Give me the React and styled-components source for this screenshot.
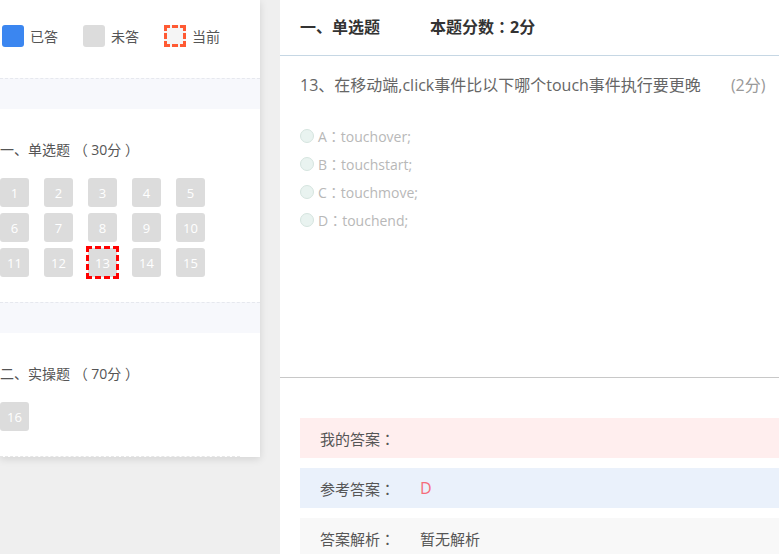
import React from "react";
import styled, { createGlobalStyle, css } from "styled-components";

const GlobalStyle = createGlobalStyle`
  html, body {
    margin: 0;
    padding: 0;
    background: #efefef;
    font-family: "Open Sans", "Noto Sans CJK SC", sans-serif;
    overflow: hidden;
  }
`;

// ─── Layout ──────────────────────────────────────────────────────────────────

const Page = styled.div`
  display: flex;
  gap: 20px;
  height: 554px;
  overflow: hidden;
`;

const Sheet = styled.div`
  width: 260px;
  flex-shrink: 0;
  align-self: flex-start;
  background: #fff;
  box-shadow: 0 2px 8px rgba(0, 0, 0, 0.12);
`;

const Legend = styled.div`
  display: flex;
  align-items: center;
  gap: 25px;
  height: 78px;
  padding: 0 0 6px 2px;
  box-sizing: border-box;
`;

const LegendItem = styled.div`
  display: flex;
  align-items: center;
  gap: 6px;
  font-size: 14px;
  color: #555;
`;

const Swatch = styled.span`
  width: 22px;
  height: 22px;
  border-radius: 3px;
  box-sizing: border-box;
  background: ${({ $kind }) => ($kind === "done" ? "#3b86f0" : $kind === "todo" ? "#dcdcdc" : "#f5f5f5")};
  ${({ $kind }) =>
    $kind === "current" &&
    css`
      border: 3px dashed #ff5a33;
      border-radius: 0;
    `}
`;

const Band = styled.div`
  height: 31px;
  background: #f7f8fc;
  border-top: 1px dashed #e6e8ee;
  box-sizing: border-box;
`;

const Section = styled.div`
  padding: 31px 0 25px;
  ${({ $last }) =>
    $last &&
    css`
      border-bottom: 1px dashed #e6e6e6;
      margin-right: 20px;
    `}
`;

const SectionTitle = styled.div`
  font-size: 14px;
  line-height: 20px;
  color: #555;
  margin-bottom: 18px;
`;

const Grid = styled.div`
  display: grid;
  grid-template-columns: repeat(5, 29px);
  column-gap: 15px;
  row-gap: 6px;
`;

const Cell = styled.div`
  width: 29px;
  height: 29px;
  border-radius: 3px;
  background: #dcdcdc;
  color: #fff;
  font-size: 13px;
  display: flex;
  align-items: center;
  justify-content: center;
  ${({ $current }) =>
    $current &&
    css`
      border-radius: 0;
      outline: 3px dashed #f00;
      outline-offset: -1px;
    `}
`;

// ─── Question ────────────────────────────────────────────────────────────────

const Paper = styled.div`
  flex: 1;
  background: #fff;
  display: flex;
  flex-direction: column;
  min-width: 0;
`;

const Header = styled.div`
  height: 56px;
  flex-shrink: 0;
  display: flex;
  align-items: center;
  gap: 50px;
  padding: 0 0 4px 20px;
  box-sizing: border-box;
  border-bottom: 1px solid #c6d7e4;
  font-size: 16px;
  font-weight: 700;
  color: #333;
`;

const Colon = styled.span`
  font-family: "Noto Sans CJK TC", sans-serif;
`;

const Body = styled.div`
  height: 322px;
  flex-shrink: 0;
  padding: 18px 0 0 20px;
  box-sizing: border-box;
  border-bottom: 1px solid #c8c8c8;
`;

const Stem = styled.div`
  display: flex;
  gap: 30px;
  font-size: 16px;
  line-height: 22px;
  color: #666;
  margin-bottom: 26px;
`;

const Score = styled.span`
  color: #999;
`;

const Options = styled.div`
  display: flex;
  flex-direction: column;
`;

const Option = styled.label`
  display: flex;
  align-items: center;
  gap: 4px;
  height: 28px;
  font-size: 14px;
  color: #b8b8b8;
`;

const Radio = styled.span`
  width: 14px;
  height: 14px;
  border-radius: 50%;
  box-sizing: border-box;
  background: #e9f3f0;
  border: 1px solid #d5e4df;
`;

const Answers = styled.div`
  display: flex;
  flex-direction: column;
  flex-shrink: 0;
  gap: 10px;
  padding: 40px 0 0 20px;
`;

const AnswerRow = styled.div`
  display: flex;
  align-items: center;
  height: 40px;
  padding-left: 20px;
  font-size: 15px;
  color: #555;
  background: ${({ $tone }) => ({ mine: "#ffeeee", ref: "#eaf1fb", note: "#f8f8f8" }[$tone])};
`;

const AnswerLabel = styled.span`
  width: 100px;
  flex-shrink: 0;
`;

const AnswerValue = styled.span`
  color: ${({ $red }) => ($red ? "#f56c7a" : "#555")};
  font-size: ${({ $red }) => ($red ? "16px" : "15px")};
`;

// ─── Data ────────────────────────────────────────────────────────────────────

const sections = [
  { title: "一、单选题 （ 30分 ）", items: Array.from({ length: 15 }, (_, i) => i + 1) },
  { title: "二、实操题 （ 70分 ）", items: [16] },
];

const options = [
  ["A", "touchover;"],
  ["B", "touchstart;"],
  ["C", "touchmove;"],
  ["D", "touchend;"],
];

const CURRENT = 13;

export default function App() {
  return (
    <>
      <GlobalStyle />
      <Page>
        <Sheet>
          <Legend>
            <LegendItem>
              <Swatch $kind="done" />
              已答
            </LegendItem>
            <LegendItem>
              <Swatch $kind="todo" />
              未答
            </LegendItem>
            <LegendItem>
              <Swatch $kind="current" />
              当前
            </LegendItem>
          </Legend>

          {sections.map((s, i) => (
            <React.Fragment key={s.title}>
              <Band />
              <Section $last={i === sections.length - 1}>
                <SectionTitle>{s.title}</SectionTitle>
                <Grid>
                  {s.items.map((n) => (
                    <Cell key={n} $current={n === CURRENT}>
                      {n}
                    </Cell>
                  ))}
                </Grid>
              </Section>
            </React.Fragment>
          ))}
        </Sheet>

        <Paper>
          <Header>
            <span>一、单选题</span>
            <span>
              本题分数<Colon>：</Colon>2分
            </span>
          </Header>
          <Body>
            <Stem>
              <span>13、在移动端,click事件比以下哪个touch事件执行要更晚</span>
              <Score>(2分)</Score>
            </Stem>
            <Options>
              {options.map(([k, v]) => (
                <Option key={k}>
                  <Radio />
                  <span>
                    {k}
                    <Colon>：</Colon>
                    {v}
                  </span>
                </Option>
              ))}
            </Options>
          </Body>
          <Answers>
            <AnswerRow $tone="mine">
              <AnswerLabel>
                我的答案<Colon>：</Colon>
              </AnswerLabel>
            </AnswerRow>
            <AnswerRow $tone="ref">
              <AnswerLabel>
                参考答案<Colon>：</Colon>
              </AnswerLabel>
              <AnswerValue $red>D</AnswerValue>
            </AnswerRow>
            <AnswerRow $tone="note">
              <AnswerLabel>
                答案解析<Colon>：</Colon>
              </AnswerLabel>
              <AnswerValue>暂无解析</AnswerValue>
            </AnswerRow>
          </Answers>
        </Paper>
      </Page>
    </>
  );
}
